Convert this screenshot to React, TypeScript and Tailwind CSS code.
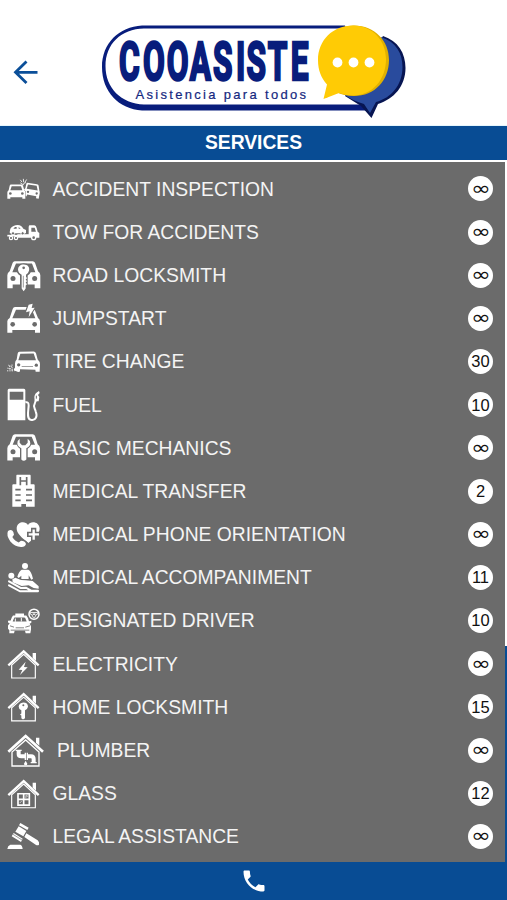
import type { ReactNode } from "react";

type Service = { name: string; count: string; viewBox: string; icon: ReactNode; indent?: boolean };

const GRAY = "#6b6b6b";

function House({ children, wide = false }: { children: ReactNode; wide?: boolean }) {
  return wide ? (
    <>
      <path d="M25 202L77 155L129 202" fill="none" strokeWidth="8" />
      <path d="M36 203V245H117V203L77 167Z" fill="none" strokeWidth="4" />
      <path d="M108 160H118V184L108 175Z" stroke="none" />
      {children}
    </>
  ) : (
    <>
      <path d="M25 71L71 29L116 71" fill="none" strokeWidth="7" />
      <path d="M35 70V109H106V70L71 38Z" fill="none" strokeWidth="3.5" />
      <path d="M98 34H108V58L98 49Z" stroke="none" />
      {children}
    </>
  );
}

const services: Service[] = [
  {
    name: "ACCIDENT INSPECTION", count: "∞", viewBox: "0 7.5 132 129.5",
    icon: (
      <>
        <path fillRule="evenodd" stroke="none" d="M33 60H65Q68 60 69 64L73 77Q76 79 76 84V103H67V98H31V103H22V84Q22 79 26 77L29 64Q30 60 33 60ZM35 65L31 77H67L63 65Z" />
        <circle cx="31" cy="87" r="4" fill={GRAY} stroke="none" />
        <circle cx="67" cy="87" r="4" fill={GRAY} stroke="none" />
        <path fillRule="evenodd" stroke="none" d="M82 55L111 59Q116 60 116 64L118 78Q120 82 119 87L116 103L108 101L109 95L81 90L80 96L77 94V81L72 75L76 71L79 58Q80 55 82 55ZM84 60L80 73L113 78L110 64Z" />
        <circle cx="84" cy="82" r="3.5" fill={GRAY} stroke="none" />
        <circle cx="110" cy="87" r="3.5" fill={GRAY} stroke="none" />
        <path fill="none" strokeWidth="2.5" d="M61 46L66 53M70 43L71 53M80 45L75 53M61 55L70 61L72 56L78 54" />
      </>
    ),
  },
  {
    name: "TOW FOR ACCIDENTS", count: "∞", viewBox: "0 137 132 129.5",
    icon: (
      <>
        <path stroke="none" d="M29 201L31 190Q39 179 53 179Q65 180 70 190L78 194V204H30Z" />
        <path stroke="none" fillRule="evenodd" d="M88 180H103Q108 180 110 188L113 199L118 203V217H52V207H86V184ZM94 187V199H108L104 187Z" />
        <path strokeWidth="5" fill="none" d="M22 211H87" />
        <circle cx="39" cy="204" r="5" fill={GRAY} strokeWidth="3" />
        <circle cx="68" cy="204" r="5" fill={GRAY} strokeWidth="3" />
        <circle cx="33" cy="218" r="5" fill={GRAY} strokeWidth="3.5" />
        <circle cx="48" cy="218" r="5" fill={GRAY} strokeWidth="3.5" />
        <circle cx="101" cy="217" r="6" fill={GRAY} strokeWidth="4" />
        <path d="M40 190L45 185H50V190ZM56 185L62 190H56Z" fill={GRAY} stroke="none" />
      </>
    ),
  },
  {
    name: "ROAD LOCKSMITH", count: "∞", viewBox: "0 5.5 132 129.5",
    icon: (
      <>
        <path stroke="none" fillRule="evenodd" d="M44 27H98Q103 27 105 32L114 57Q121 62 121 69V108H104V97H38V108H22V69Q22 62 29 57L38 32Q40 27 44 27ZM48 34L37 60H106L96 34Z" />
        <circle cx="39" cy="79" r="7.5" fill={GRAY} stroke="none" />
        <circle cx="104" cy="79" r="7.5" fill={GRAY} stroke="none" />
        <path fill={GRAY} stroke="none" d="M52 40Q71 26 91 40L94 57Q89 67 83 70V114H60V70Q48 63 50 49Z" />
        <path stroke="none" fillRule="evenodd" d="M71 37C84 37 90 46 87 56Q85 64 78 68V74L81 78L77 82L81 87L77 91L81 96L77 100V109L71 117L65 109V68Q55 63 54 53C54 43 61 37 71 37ZM71 43A4 4 0 1 0 71 51A4 4 0 1 0 71 43Z" />
        <path d="M70 71V106" stroke={GRAY} strokeWidth="2" />
      </>
    ),
  },
  {
    name: "JUMPSTART", count: "∞", viewBox: "0 135 132 129.5",
    icon: (
      <>
        <path stroke="none" fillRule="evenodd" d="M45 165H80L77 173H48L37 199H106L99 181L104 173L114 198Q120 202 120 208V242H105V234H37V242H22V208Q22 202 29 198L38 171Q40 165 45 165Z" />
        <circle cx="38" cy="217" r="7" fill={GRAY} stroke="none" />
        <circle cx="104" cy="217" r="7" fill={GRAY} stroke="none" />
        <path stroke="none" d="M86 158L98 155L95 168L104 167L86 196L89 178L78 181Z" />
      </>
    ),
  },
  {
    name: "TIRE CHANGE", count: "30", viewBox: "0 6.5 132 129.5",
    icon: (
      <>
        <path stroke="none" fillRule="evenodd" d="M58 42L101 41Q106 41 108 46L113 65Q120 71 120 79L119 102H107L106 96L60 94V101Q55 104 49 100L42 98Q40 93 45 90V77Q45 69 50 65L53 47Q54 42 58 42ZM61 48L55 67H108L101 47Z" />
        <circle cx="56" cy="81" r="5" fill={GRAY} stroke="none" />
        <circle cx="109" cy="82" r="5" fill={GRAY} stroke="none" />
        <path d="M65 86H99" stroke={GRAY} strokeWidth="2" />
        <path fill="none" strokeWidth="2.5" strokeDasharray="4 3" d="M25 82L37 87M22 91L38 94M21 99H43M29 84V98M36 80V98" />
      </>
    ),
  },
  {
    name: "FUEL", count: "10", viewBox: "0 136 132 129.5",
    icon: (
      <>
        <path stroke="none" fillRule="evenodd" d="M27 153H72Q76 153 76 158V248H23V158Q23 153 27 153ZM29 162V186H70V162Z" />
        <path fill="none" strokeWidth="6" d="M76 194Q86 191 86 204C85 220 79 243 92 246C108 250 113 235 107 221C104 210 98 207 105 195L109 186" />
        <path stroke="none" d="M117 160L119 166L114 172L118 178L116 191H104L103 178Q104 166 117 160Z" />
        <path d="M109 174V183" stroke={GRAY} strokeWidth="3" />
      </>
    ),
  },
  {
    name: "BASIC MECHANICS", count: "∞", viewBox: "0 4.5 132 129.5",
    icon: (
      <>
        <path stroke="none" fillRule="evenodd" d="M45 29H98Q103 29 105 34L113 59Q120 64 120 71V108H105V98H38V108H22V71Q22 64 29 59L38 34Q40 29 45 29ZM48 37L38 61H105L95 37Z" />
        <circle cx="39" cy="82" r="7.5" fill={GRAY} stroke="none" />
        <circle cx="104" cy="82" r="7.5" fill={GRAY} stroke="none" />
        <path d="M50 44L59 38L71 50L83 38L94 50Q96 64 83 73V109H60V73Q47 65 50 44Z" fill={GRAY} stroke="none" />
        <path stroke="none" d="M59 43V55L66 62H76L83 55V43Q91 48 91 57Q90 66 79 71V105Q71 113 64 105V71Q53 66 52 57Q52 48 59 43Z" />
      </>
    ),
  },
  {
    name: "MEDICAL TRANSFER", count: "2", viewBox: "0 134 132 129.5",
    icon: (
      <>
        <path stroke="none" d="M51 151H90Q92 151 92 154V180H101Q104 180 104 183V247H78V239H64V247H37V183Q37 180 40 180H49V154Q49 151 51 151Z" />
        <path fill="none" stroke={GRAY} strokeWidth="5" d="M61 158V183M80 158V183M61 170H80M46 196H62M78 196H96M46 212H62M78 212H96M46 228H62M78 228H96" />
      </>
    ),
  },
  {
    name: "MEDICAL PHONE ORIENTATION", count: "∞", viewBox: "0 2.7 132 129.5",
    icon: (
      <>
        <path stroke="none" d="M84 39C91 25 118 28 119 49C119 66 102 78 85 93C66 77 49 65 50 48C51 29 76 25 84 39Z" />
        <path d="M39 52Q44 61 42 70Q54 88 63 85Q75 82 85 98" fill="none" stroke={GRAY} strokeWidth="4" />
        <path stroke="none" d="M24 57Q35 49 40 60L42 68L37 75Q45 88 56 91L63 86Q75 86 78 96Q75 106 63 105Q44 103 31 88Q18 70 24 57Z" />
        <path d="M101 47V87M81 67H121" stroke={GRAY} strokeWidth="16" />
        <path d="M101 52V83M86 67H117" strokeWidth="7" />
      </>
    ),
  },
  {
    name: "MEDICAL ACCOMPANIMENT", count: "11", viewBox: "0 132 132 129.5",
    icon: (
      <>
        <circle cx="75" cy="162" r="9" stroke="none" />
        <circle cx="34" cy="191" r="9" stroke="none" />
        <path stroke="none" d="M65 173H85Q94 177 99 200L94 203L86 190V201H64V191L56 198L52 194Q57 177 65 173Z" />
        <path stroke="none" d="M37 202L46 197L63 204L77 205L98 207L116 223V230L101 228L86 220L65 222L38 211Z" />
        <path fill="none" strokeWidth="6" strokeLinecap="round" d="M27 208L62 228L78 227L93 236H114M27 220L60 238H114" />
      </>
    ),
  },
  {
    name: "DESIGNATED DRIVER", count: "10", viewBox: "0 -2.5 132 129.5",
    icon: (
      <>
        <path stroke="none" fillRule="evenodd" d="M46 41H72V47H79Q84 52 87 64L94 63V69L89 72L93 79V89L91 100H77L75 93H44L42 100H28V91L24 87V77L29 70L24 68V63L32 62Q35 51 39 47H46ZM43 53L38 65H80L75 53Z" />
        <path d="M39 52Q55 44 78 52M46 66V56M64 65V54" fill="none" strokeWidth="3" />
        <path d="M30 78L42 82M90 78L76 82M47 84H72M32 91H88" stroke={GRAY} strokeWidth="2.5" />
        <circle cx="102" cy="43" r="15" fill="none" strokeWidth="4.5" />
        <path d="M91 38H113V43L108 45L104 54H100L96 45L91 43Z" fill="none" strokeWidth="2.5" />
        <path d="M98 43H106" strokeWidth="4" />
      </>
    ),
  },
  {
    name: "ELECTRICITY", count: "∞", viewBox: "0 127 132 129.5",
    icon: (
      <g transform="translate(0 126)">
        <House><path stroke="none" d="M77 60L56 84L67 85L60 100L83 77L72 76Z" /></House>
      </g>
    ),
  },
  {
    name: "HOME LOCKSMITH", count: "15", viewBox: "0 1.5 132 129.5",
    icon: (
      <House>
        <path stroke="none" fillRule="evenodd" d="M70 54Q84 54 84 67Q83 74 75 77V101L69 105L64 101V93L60 91L64 87V77Q56 74 56 66Q57 55 70 54ZM70 59A3 3 0 1 0 70 65A3 3 0 1 0 70 59Z" />
      </House>
    ),
  },
  {
    name: "PLUMBER", count: "∞", viewBox: "0 131 132 129.5", indent: true,
    icon: (
      <House wide>
        <path fill="none" strokeWidth="12" d="M56 199V210Q56 216 64 216H76M81 216H93Q101 216 101 224V235" />
        <path fill="none" strokeWidth="4" d="M47 198H65M76 205V227M82 205V227M92 235H110" />
        <path stroke="none" d="M77 229L82 238Q82 243 77 243Q72 243 72 238Z" />
      </House>
    ),
  },
  {
    name: "GLASS", count: "12", viewBox: "0 5.7 132 129.5",
    icon: (
      <g transform="translate(0 4)">
        <House>
          <path fill="none" strokeWidth="5" d="M54 67H88V101H54ZM71 67V101M54 84H88" />
          <path fill="none" strokeWidth="2" d="M75 75L82 70M76 79L84 73M59 95L65 89" />
        </House>
      </g>
    ),
  },
  {
    name: "LEGAL ASSISTANCE", count: "∞", viewBox: "0 135 132 129.5",
    icon: (
      <>
        <path stroke="none" d="M61 159L86 173L82 180L57 166ZM56 169L79 183L70 199L46 185ZM41 189L68 206L63 216L35 199ZM79 190L113 211Q119 216 117 224Q113 228 107 224L73 201ZM31 224H61Q67 226 68 237H22Q23 227 31 224Z" />
        <path fill="none" stroke={GRAY} strokeWidth="2" d="M39 193L66 210" />
      </>
    ),
  },
];

function Logo() {
  return (
    <svg className="h-[110px] w-[320px]" viewBox="95 15 320 110" fontFamily="'Liberation Sans', Arial, sans-serif">
      <path fill="#081d7c" fillRule="evenodd" d="M142 25.5H345L368 110.5H142C119 109 102 92 102 67C102 43 119 27 142 25.5ZM144 28.5C121 29 105.500 44 105.500 66C105.500 88 121 103.500 144 104.500H362L345 28.500Z" />
      <g transform="translate(118.900 80.300) scale(.58 1)">
        <text x="0 41.5 82.3 122 162.2 201.7 219.8 256.6 296.4" fill="#081d7c" stroke="#081d7c" strokeWidth="2.600" fontFamily="Roboto, 'Liberation Sans', sans-serif" fontSize="54.500" fontWeight="700">COOASISTE</text>
      </g>
      <text x="135.500" y="99" fill="#14277e" fontSize="13" textLength="170.500" lengthAdjust="spacing" stroke="#14277e" strokeWidth=".2">Asistencia para todos</text>
      <path fill="#071552" d="M383 36C398 41 405.500 53 405.500 68C405.500 86 394 99 378 104L371.500 118L361 106L345 96Z" />
      <path fill="#294b9d" d="M381 37C396 42 402.500 53 402.500 67C402.500 85 391 98 376 102L370 113L364 104C357 102 350 99 345 95Z" />
      <path fill="#e0b000" d="M354 25.500C375 25.500 389 41 389 60C389 80 375 96 354 96Q344 96 336 92L326 98L328 84C310 62 325 25.500 354 25.500Z" />
      <path fill="#ffcb05" d="M353 25.500C373 25.500 386 41 386 59C386 79 373 95.500 353 95.500Q346 95.500 339 93L323.500 99L327 84.500C321 78 318 70 318 60C318 40 333 25.500 353 25.500Z" />
      <g fill="#fff"><circle cx="337.500" cy="62.500" r="4.900" /><circle cx="353.500" cy="62.500" r="4.900" /><circle cx="369.500" cy="62.500" r="4.900" /></g>
    </svg>
  );
}

export default function App() {
  return (
    <div className="flex h-[900px] w-[507px] flex-col overflow-hidden bg-white font-['Liberation_Sans',Arial,sans-serif]">
      <header className="flex h-[126px] shrink-0 items-start border-b border-[#e6f6fc] pt-[15px]">
        <button aria-label="Back" className="ml-[13px] mt-[44px] mr-[56px] h-[26px] w-[26px]">
          <svg viewBox="0 0 26 26" fill="none" stroke="#0b4f99" strokeWidth="2.800">
            <path d="M24.500 13.300H2.500M13.500 2.500L2.500 13.300L13.500 24" />
          </svg>
        </button>
        <Logo />
      </header>
      <div className="flex h-[34px] shrink-0 items-center justify-center bg-[#084c94] text-[19.3px] font-bold text-white">
        <h1>SERVICES</h1>
      </div>
      <main className="flex h-[702px] shrink-0 bg-gradient-to-b from-white from-[486px] to-[#084c94] to-[486px] pt-[2px] pr-[2px]">
        <ul className="w-full bg-[#6b6b6b] pt-[5.4px]">
          {services.map((s) => (
            <li key={s.name} className="flex h-[43.17px] items-center pr-[12px]">
              <svg className="h-[43.17px] w-[44px] shrink-0" viewBox={s.viewBox} fill="#fff" stroke="#fff">{s.icon}</svg>
              <span className={`grow whitespace-nowrap pt-[1px] text-[19.3px] leading-none text-[#f4f4f4] ${s.indent ? "pl-[13px]" : "pl-[8.5px]"}`}>{s.name}</span>
              <span className="flex h-[25px] w-[25px] items-center justify-center rounded-full bg-white text-[#111]">
                {s.count === "∞" ? (
                  <span className="scale-x-125 pb-[1px] font-['DejaVu_Sans',sans-serif] text-[19px] leading-none">∞</span>
                ) : (
                  <span className="text-[16.5px] leading-none">{s.count}</span>
                )}
              </span>
            </li>
          ))}
        </ul>
      </main>
      <footer className="flex grow items-center justify-center bg-[#084c94]">
        <svg className="h-[28px] w-[28px]" viewBox="0 0 24 24" fill="#fff">
          <path d="M6.620 10.790c1.440 2.830 3.760 5.140 6.590 6.590l2.200-2.200c.27-.27.67-.36 1.020-.24 1.120.37 2.330.57 3.570.57.550 0 1 .45 1 1V20c0 .550-.45 1-1 1C10.610 21 3 13.390 3 4c0-.550.450-1 1-1h3.500c.550 0 1 .450 1 1 0 1.250.2 2.450.57 3.570.11.350.03.740-.25 1.020z" />
        </svg>
      </footer>
    </div>
  );
}
